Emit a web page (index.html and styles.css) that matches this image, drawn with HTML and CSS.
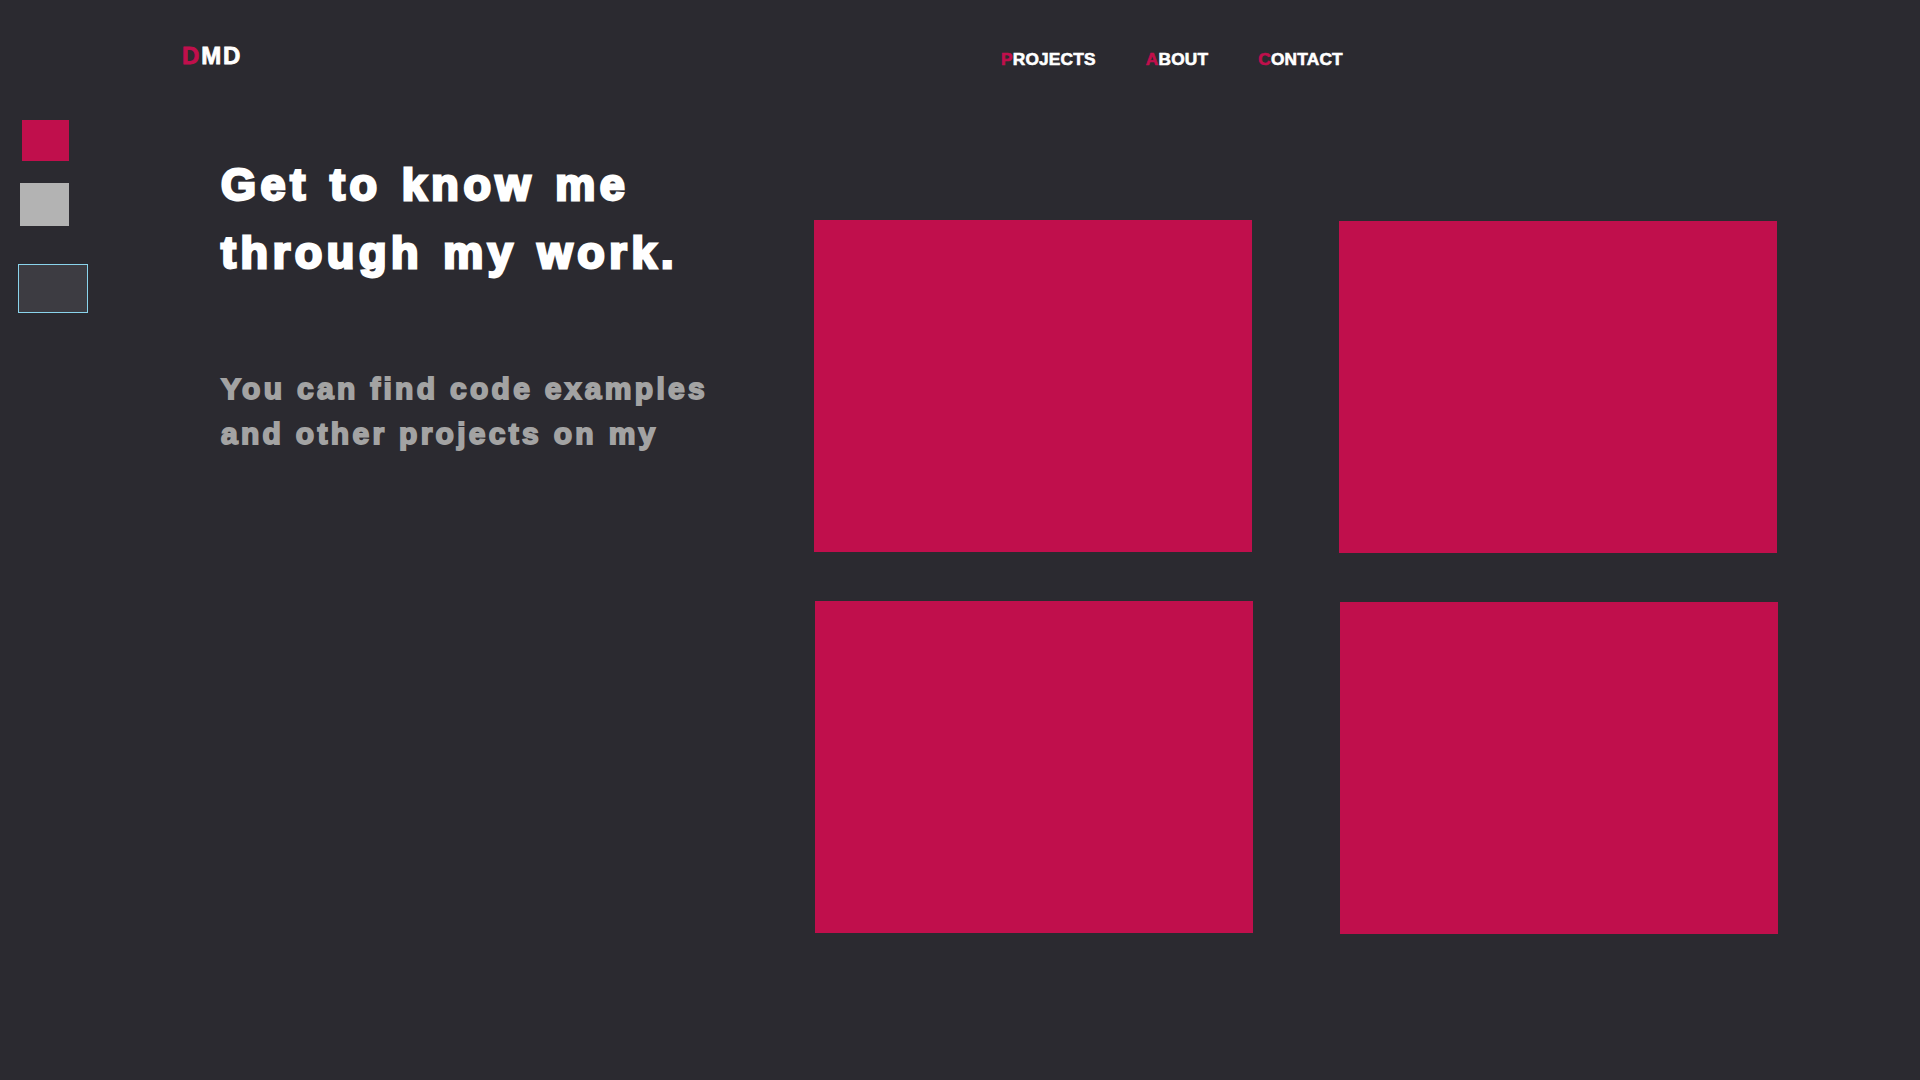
FILE: index.html
```html
<!DOCTYPE html>
<html lang="en">
<head>
<meta charset="utf-8">
<title>DMD</title>
<link rel="stylesheet" href="styles.css">
</head>
<body>
<div class="page">
  <aside class="sidebar">
    <div class="swatch swatch-red"></div>
    <div class="swatch swatch-gray"></div>
    <div class="swatch swatch-box"></div>
  </aside>
  <main class="main">
    <header class="header">
      <div class="logo"><span class="accent">D</span>MD</div>
      <nav class="nav">
        <a class="nav-link" href="#"><span class="accent">P</span>ROJECTS</a>
        <a class="nav-link" href="#"><span class="accent">A</span>BOUT</a>
        <a class="nav-link" href="#"><span class="accent">C</span>ONTACT</a>
      </nav>
    </header>
    <section class="content">
      <div class="intro">
        <h1 class="title">Get to know me through my work.</h1>
        <p class="lead">You can find code examples and other projects on my</p>
      </div>
      <div class="tiles">
        <div class="tile"></div>
        <div class="tile tile-2"></div>
        <div class="tile tile-3"></div>
        <div class="tile tile-4"></div>
      </div>
    </section>
  </main>
</div>
</body>
</html>
```

FILE: styles.css
```css
html, body {
  margin: 0;
  padding: 0;
  background: #2b2a30;
}
body {
  font-family: "Liberation Sans", Arial, sans-serif;
  color: #ffffff;
  height: 1080px;
  overflow: hidden;
}
.page {
  display: flex;
}
.sidebar {
  width: 100px;
  flex: none;
  display: flex;
  flex-direction: column;
  align-items: flex-start;
  padding-top: 120px;
}
.swatch {
  flex: none;
}
.swatch-red {
  width: 47px;
  height: 41px;
  margin-left: 22px;
  background: #c00f4c;
}
.swatch-gray {
  width: 49px;
  height: 43px;
  margin-left: 20px;
  margin-top: 22px;
  background: #b3b3b3;
}
.swatch-box {
  width: 68px;
  height: 47px;
  margin-left: 18px;
  margin-top: 38px;
  background: #3d3c42;
  border: 1px solid #8ad4ec;
}
.main {
  flex: 1;
}
.header {
  box-sizing: border-box;
  height: 120px;
  padding: 44px 0 0 82px;
  display: flex;
  align-items: flex-start;
}
.logo {
  font-size: 24px;
  line-height: 24px;
  font-weight: 700;
  letter-spacing: 1.8px;
  -webkit-text-stroke: 0.8px currentColor;
  width: 819px;
}
.accent {
  color: #c00f4c;
}
.nav {
  display: flex;
  gap: 50px;
  margin-top: 5px;
}
.nav-link {
  color: #ffffff;
  text-decoration: none;
  font-size: 17.3px;
  line-height: 20px;
  font-weight: 700;
  letter-spacing: 0.2px;
  -webkit-text-stroke: 0.6px currentColor;
}
.content {
  display: flex;
  align-items: flex-start;
}
.intro {
  width: 520px;
  margin-left: 121px;
  padding-top: 31px;
  flex: none;
}
.title {
  margin: 0;
  font-size: 45px;
  line-height: 67.5px;
  font-weight: 700;
  letter-spacing: 4.6px;
  word-spacing: 3px;
  -webkit-text-stroke: 2.8px currentColor;
  color: #ffffff;
}
.lead {
  margin: 80px 0 0;
  font-size: 30px;
  line-height: 45px;
  font-weight: 700;
  letter-spacing: 3.3px;
  -webkit-text-stroke: 1.8px currentColor;
  color: #a3a3a3;
}
.tiles {
  margin-left: 73px;
  margin-top: 100px;
  display: grid;
  grid-template-columns: repeat(2, 439px);
  grid-template-rows: repeat(2, 333px);
  column-gap: 86px;
  row-gap: 48px;
}
.tile {
  width: 438px;
  height: 332px;
  background: #c00f4c;
}
.tile-2 {
  margin-top: 1px;
}
.tile-3 {
  margin-left: 1px;
}
.tile-4 {
  margin-top: 1px;
  margin-left: 1px;
}
```
